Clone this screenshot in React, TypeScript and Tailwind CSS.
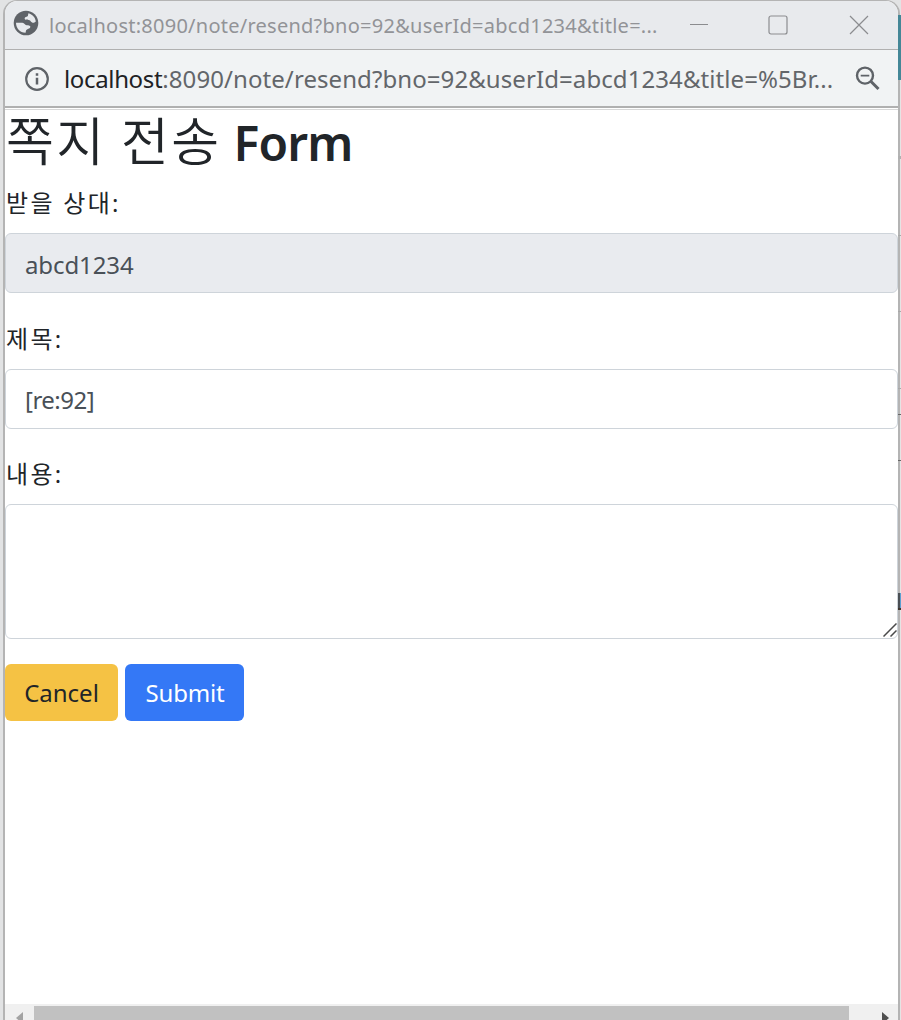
import React from "react";

const URL_REST = ":8090/note/resend?bno=92&userId=abcd1234&title=%5Br...";

function TitleBar() {
  return (
    <header className="flex h-[50px] shrink-0 items-center border-b border-[#b0b0b0] bg-[#e8eaed] pl-2">
      <svg className="mb-1 size-[26px] shrink-0" viewBox="0 0 26 26">
        <circle cx="13" cy="13" r="12.3" fill="#5f6368" />
        <path
          d="M15.5 3.2c3.8 1 6.8 4.1 7.3 8.2-1.2 1-2.3 1.8-3.7 1.2-1.2-.5-1.3-1.8-2.5-2.3-1.5-.5-3.2.1-4.4-.8-.8-.6-.6-1.7.1-2.3.7-.6 1.9-.3 2.5-1.2.5-.7.1-1.9.7-2.8zM3 12.7h6.2c1.7 0 2.1 1.2 3.2 2 1.3.8 4.4.2 4.9 1.7.3 1.2-.9 2.1-2 2.4-1.2.4-2.3 1.3-2.4 2.3l-.3 1.7C6.8 22.6 3 17.9 3 12.7z"
          fill="#e8eaed"
        />
      </svg>
      <span className="ml-[10px] mt-[3px] w-[612px] shrink-0 whitespace-nowrap text-[20px] leading-[28px] tracking-[0.25px] text-[#929397]">
        localhost:8090/note/resend?bno=92&amp;userId=abcd1234&amp;title=...
      </span>
      <div className="ml-[29px] flex items-center text-[#8b8c8f]">
        <svg className="h-5 w-[18px]" viewBox="0 0 18 20" stroke="currentColor" fill="none">
          <path d="M0 9.5h18" />
        </svg>
        <svg className="ml-[60px] size-5" viewBox="0 0 20 20" stroke="currentColor" fill="none">
          <rect x="1" y="1" width="18" height="18" rx="2" strokeWidth="1.2" />
        </svg>
        <svg className="ml-[61px] size-5" viewBox="0 0 20 20" stroke="currentColor" fill="none">
          <path d="M1 1l18 18M19 1L1 19" strokeWidth="1.2" />
        </svg>
      </div>
    </header>
  );
}

function AddressBar() {
  return (
    <div className="flex h-[58px] shrink-0 items-center border-b-2 border-[#b0b0b0] bg-[#f1f3f4] pl-5">
      <svg className="mt-[2px] size-6 shrink-0" viewBox="0 0 24 24" fill="none" stroke="#5f6368">
        <circle cx="12" cy="12" r="10.8" strokeWidth="2.2" />
        <path d="M12 10.8v6.7M12 6.3v2.5" strokeWidth="2.5" />
      </svg>
      <span className="ml-[15px] mt-[2px] w-[776px] shrink-0 whitespace-nowrap text-[24px] leading-[32px] text-[#63666a]">
        <span className="tracking-[-0.35px] text-[#202124]">localhost</span>
        <span className="tracking-[0.08px]">{URL_REST}</span>
      </span>
      <svg className="ml-[15px] mt-[2px] size-[26px] shrink-0" viewBox="0 0 26 26" fill="none" stroke="#5f6368">
        <circle cx="10" cy="9.6" r="8" strokeWidth="2.4" />
        <path d="M5.7 9.6h8.6" strokeWidth="1.8" />
        <path d="M16 15.5l7.5 7.5" strokeWidth="3" />
      </svg>
    </div>
  );
}

function Label({ children }: { children: React.ReactNode }) {
  return (
    <label className="block h-9 whitespace-nowrap pl-px text-[24px] leading-[35px] tracking-[2.3px]">
      {children}
    </label>
  );
}

const fieldClass =
  "block w-full rounded-[6px] border border-[#ced4da] px-[19px] text-[24px] leading-[36px] text-[#495057] outline-none";

function NoteForm() {
  return (
    <form className="flex flex-col">
      <h1 className="h-[58px] whitespace-nowrap pl-px pt-[2px] text-[52px] font-[350] leading-[58px] tracking-[2.3px]">
        <span className="[word-spacing:-1px]">쪽지 전송</span>
        <span className="ml-[12px] text-[48px] font-semibold tracking-[-0.8px]">Form</span>
      </h1>
      <div className="mt-[17px]">
        <Label>받을 상대:</Label>
        <input readOnly value="abcd1234" className={`${fieldClass} mt-3 h-[60px] bg-[#e9ebef] pt-[2px] tracking-[-0.1px]`} />
      </div>
      <div className="mt-[28px]">
        <Label>제목:</Label>
        <input defaultValue="[re:92]" className={`${fieldClass} mt-3 h-[60px] bg-white pt-px tracking-[-0.5px]`} />
      </div>
      <div className="mt-[27px]">
        <Label>내용:</Label>
        <div className="relative mt-3">
          <textarea className={`${fieldClass} h-[135px] resize-none bg-white`} />
          <svg className="absolute bottom-[2px] right-[1px] size-[14px]" viewBox="0 0 14 14" stroke="#4a4a4a" fill="none">
            <path d="M.5 13.5l13-13M7.5 13.5l6-6" strokeWidth="1.5" />
          </svg>
        </div>
      </div>
      <div className="mt-[25px] flex gap-[7px]">
        <button type="button" className="h-[57px] w-[113px] whitespace-nowrap rounded-[6px] bg-[#f5c244] pb-px pt-[2px] text-[24px] text-[#212529]">
          Cancel
        </button>
        <button type="button" className="h-[57px] w-[119px] whitespace-nowrap rounded-[6px] bg-[#3478f6] pb-px pl-px pt-[2px] text-[24px] tracking-[-0.2px] text-white">
          Submit
        </button>
      </div>
    </form>
  );
}

function ScrollBar() {
  return (
    <div className="flex h-4 shrink-0 items-end bg-[#f0f0f0]">
      <svg className="h-4 w-[29px]" viewBox="0 0 29 16">
        <path d="M18 8v12l-7-6z" fill="#a3a3a3" />
      </svg>
      <div className="h-[14px] w-[815px] bg-[#c1c1c1]" />
      <svg className="h-4 w-[49px]" viewBox="0 0 49 16">
        <path d="M33 8v12l7-6z" fill="#505050" />
      </svg>
    </div>
  );
}

function BackdropEdge() {
  return (
    <div className="mt-[15px] flex w-[3px] shrink-0 flex-col bg-[linear-gradient(to_right,#b4b4b4_2px,#e4e4e4_2px)]">
      <div className="h-[65px] bg-[#448797]" />
      <div className="mt-[76px] h-[3px] bg-[#b0b0b0]" />
      <div className="mt-[76px] h-px bg-[#a8a8a8]" />
      <div className="mt-[75px] h-px bg-[#a8a8a8]" />
      <div className="mt-[76px] h-px bg-[#a8a8a8]" />
      <div className="mt-[25px] h-px bg-[#666]" />
      <div className="mt-[45px] h-px bg-[#666]" />
      <div className="mt-[132px] flex h-[17px] border-b-2 border-[#40352c] bg-[#4a4f54]">
        <div className="ml-[2px] w-px bg-[#5b9fd0]" />
      </div>
    </div>
  );
}

export default function App() {
  return (
    <div className="flex h-[1020px] w-[901px] overflow-hidden bg-[#e2e3e4] font-['Noto_Sans','Noto_Sans_CJK_KR',sans-serif] text-[#212529]">
      <div className="ml-[3px] flex w-[897px] shrink-0 flex-col overflow-hidden rounded-t-[14px] border-x-2 border-t border-[#b4b4b4] bg-white">
        <div className="-mt-px flex min-h-0 flex-1 flex-col">
          <TitleBar />
          <AddressBar />
          <main className="mt-px flex-1 border-t border-[#d8d8d8]">
            <NoteForm />
          </main>
          <ScrollBar />
        </div>
      </div>
      <div className="-ml-[2px] flex">
        <BackdropEdge />
      </div>
    </div>
  );
}
